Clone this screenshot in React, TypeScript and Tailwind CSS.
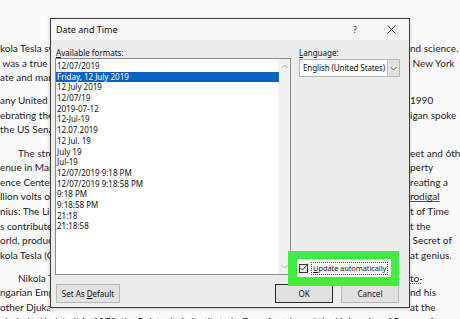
import React from "react";

type Line = { l: string; r?: string; indent?: boolean; under?: "solid" | "dotted"; gap?: boolean };

// only the edges of the page show around the dialog
const lines: Line[] = [
  { l: "kola Tesla sym", r: "nd science." },
  { l: " was a true ge", r: " New York" },
  { l: "ate and many o" },
  { l: "any United Sta", r: "1990", gap: true },
  { l: "ebrating the a", r: "igan spoke" },
  { l: "the US Senate" },
  { l: "The stre", r: "eet and 6th", indent: true, gap: true },
  { l: "enue in Manh", r: "perty" },
  { l: "ence Center,", r: "reating a" },
  { l: "llion volts of", r: "rodigal", under: "solid" },
  { l: "nius: The Life", r: "t of Time" },
  { l: "s contributed", r: "t the" },
  { l: "orld, produced", r: " Secret of" },
  { l: "kola Tesla (Ors", r: "at genius." },
  { l: "Nikola Te", r: "to-", indent: true, under: "dotted", gap: true },
  { l: "ngarian Empir", r: "nd his" },
  { l: "other Djuka w", r: "at the" },
];

function Chevron({ up }: { up?: boolean }) {
  return (
    <svg width="7" height="5" viewBox="0 0 7 5">
      <polyline
        points={up ? "0.5,4 3.5,1 6.5,4" : "0.5,1 3.5,4 6.5,1"}
        fill="none"
        stroke="currentColor"
        strokeWidth="1"
      />
    </svg>
  );
}

const formats = [
  "12/07/2019",
  "Friday, 12 July 2019",
  "12 July 2019",
  "12/07/19",
  "2019-07-12",
  "12-Jul-19",
  "12.07.2019",
  "12 Jul. 19",
  "July 19",
  "Jul-19",
  "12/07/2019 9:18 PM",
  "12/07/2019 9:18:58 PM",
  "9:18 PM",
  "9:18:58 PM",
  "21:18",
  "21:18:58",
];

export default function App() {
  return (
    <div className="relative w-[460px] h-[319px] overflow-hidden bg-[#fbfbfb]">
      {/* Document behind the dialog */}
      <div className="pt-[41px] font-['Lato',sans-serif] text-[10px] leading-[14.6px] text-[#1c1c1c]">
        {lines.map((ln, i) => (
          <div key={i} className={`flex whitespace-pre ${ln.gap ? "mt-[8.5px]" : ""}`}>
            <div className={`w-[50px] shrink-0 overflow-hidden ${ln.indent ? "pl-[18px]" : ""}`}>{ln.l}</div>
            <div className="w-[360px] shrink-0" />
            <div className="shrink-0">
              <span
                className={
                  ln.under === "solid"
                    ? "underline decoration-[#555]"
                    : ln.under === "dotted"
                    ? "underline decoration-dotted decoration-[#555]"
                    : ""
                }
              >
                {ln.r}
              </span>
            </div>
          </div>
        ))}
        <div className="whitespace-pre -mt-[1px]">
          alschule, Karlstadt in 1873, the Polytechnic Institute in Graz, Austria and the University of Prague. At
        </div>
      </div>

      {/* Date and Time dialog */}
      <div className="absolute left-[50px] top-[18px] w-[360px] h-[290px] border border-[#3c3c3c] bg-[#ececec] flex flex-col font-['Noto_Sans',sans-serif] text-[#111] whitespace-nowrap shadow-[0_1px_4px_rgba(0,0,0,0.2)]">
        <div className="h-[21px] shrink-0 bg-[#f6f6f6] flex items-center pl-[5px]">
          <span className="text-[9px]">Date and Time</span>
          <span className="ml-auto w-[36px] text-center text-[9px] text-[#333]">?</span>
          <span className="w-[36px] flex justify-center text-[#333]">
            <svg width="9" height="9" viewBox="0 0 9 9">
              <path d="M0.5 0.5 L8.5 8.5 M8.5 0.5 L0.5 8.5" stroke="currentColor" strokeWidth="1" />
            </svg>
          </span>
        </div>

        <div className="flex-1 flex flex-col px-[4px] pt-[7px] pb-[4px] text-[8px]">
          <div className="flex gap-[8px]">
            <div className="w-[236px] shrink-0">
              <div className="h-[11px] leading-[11px] pl-[1px]">
                <span className="underline">A</span>vailable formats:
              </div>
              <div className="h-[217px] border border-[#8a8a8a] bg-white flex">
                <div className="flex-1 pt-[2px]">
                  {formats.map((f, i) => (
                    <div
                      key={i}
                      className={`h-[10.7px] leading-[10.7px] pl-[1px] ${
                        i === 1 ? "bg-[#0a64c8] text-white" : ""
                      }`}
                    >
                      {f}
                    </div>
                  ))}
                </div>
                <div className="w-[11px] bg-[#f0f0f0] flex flex-col items-center justify-between py-[5px] text-[#b0b0b0]">
                  <Chevron up />
                  <Chevron />
                </div>
              </div>
            </div>

            <div className="flex-1 pr-[5px]">
              <div className="h-[11px] leading-[11px]">
                <span className="underline">L</span>anguage:
              </div>
              <div className="mt-[1px] h-[18px] border border-[#b4b4b4] bg-white flex">
                <div className="flex-1 flex items-center pl-[3px] tracking-[-0.1px]">English (United States)</div>
                <div className="w-[12px] bg-[#e2e2e2] border-l border-[#c4c4c4] flex items-center justify-center text-[#555]">
                  <Chevron />
                </div>
              </div>
            </div>
          </div>

          <div className="mt-[9px] flex">
            <button className="ml-[1px] w-[64px] h-[19px] bg-[#e1e1e1] border border-[#b8b8b8]">
              Set As <span className="underline">D</span>efault
            </button>
            <button className="ml-auto w-[58px] h-[19px] bg-[#e1e1e1] border border-[#2a2a2a]">OK</button>
            <button className="ml-[8px] mr-[6px] w-[58px] h-[19px] bg-[#e1e1e1] border border-[#b8b8b8]">
              Cancel
            </button>
          </div>
        </div>
      </div>

      {/* Highlight around "Update automatically" */}
      <div className="absolute left-[288px] top-[251px] w-[111px] h-[35px] bg-[#40ee40] pl-[9px] pt-[8px] font-['Noto_Sans',sans-serif] whitespace-nowrap">
        <div className="w-[94px] h-[18px] bg-white flex items-center pl-[2px] gap-[3px] text-[7.5px] text-[#111]">
          <div className="w-[9px] h-[9px] shrink-0 border border-[#333] flex items-center justify-center">
            <svg width="7" height="6" viewBox="0 0 7 6">
              <polyline points="0.5,3 2.5,5 6.5,0.5" fill="none" stroke="#222" strokeWidth="1" />
            </svg>
          </div>
          <span className="border border-dotted border-[#444] px-[1px] leading-[11px] tracking-[-0.1px]">
            <span className="underline">U</span>pdate automatically
          </span>
        </div>
      </div>
    </div>
  );
}
